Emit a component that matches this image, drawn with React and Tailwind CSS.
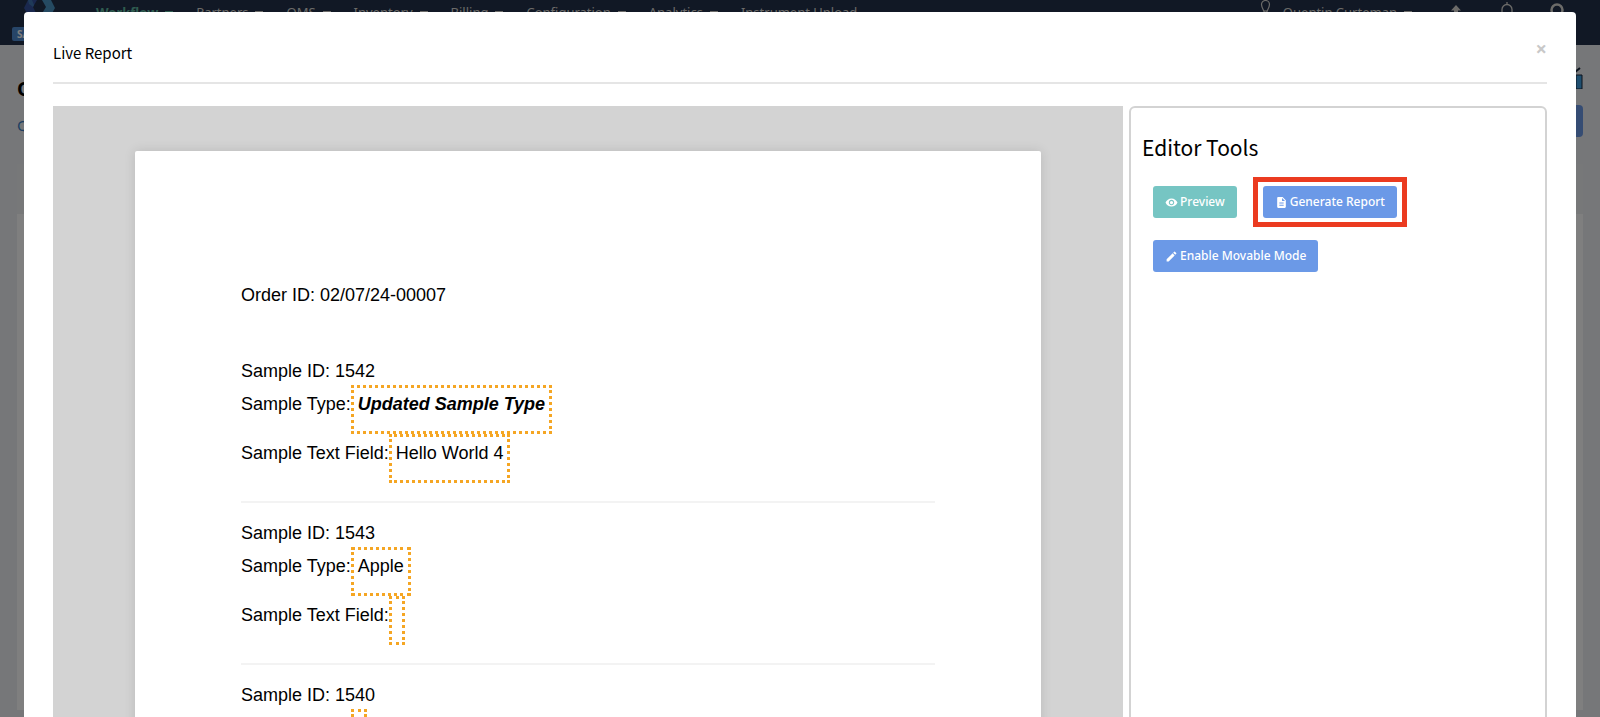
import { MdDescription, MdEdit, MdVisibility } from "react-icons/md";

const navItems = [
    { label: "Workflow", active: true, menu: true },
    { label: "Partners", menu: true },
    { label: "QMS", menu: true },
    { label: "Inventory", menu: true },
    { label: "Billing", menu: true },
    { label: "Configuration", menu: true },
    { label: "Analytics", menu: true },
    { label: "Instrument Upload" },
];

const samples = [
    { id: "1542", type: "Updated Sample Type", emphasised: true, text: "Hello World 4" },
    { id: "1543", type: "Apple", text: "" },
    { id: "1540", type: "", text: "" },
];

function Dash() {
    return <span className="w-2 h-px bg-current mb-[2px]" />;
}

function TopBar() {
    return (
        <header className="h-[45px] bg-[#22304a] text-[#d8d6d2] text-[13px] leading-5">
            <div className="flex items-start h-[27px] pl-[23px] pr-9">
                {/* Logo */}
                <svg className="w-8 h-6 shrink-0" viewBox="0 0 32 24">
                    <path d="M5 0h9l-4 7 4 8-5 7L1 8z" fill="#34509c" />
                    <path d="M19 0h9l4 8-8 14-6-7 5-8z" fill="#4a94c4" />
                    <path d="M5 0h4l2 5-1 2-4-3z" fill="#3f74b0" />
                </svg>
                <nav className="flex gap-[23px] pl-[41px] pt-[2px]">
                    {navItems.map((item) => (
                        <a
                            key={item.label}
                            href="#"
                            className={`flex items-center gap-[7px] whitespace-nowrap ${item.active ? "text-[#5fb8a0] font-bold" : ""}`}
                        >
                            {item.label}
                            {item.menu && <Dash />}
                        </a>
                    ))}
                </nav>
                <div className="flex items-start ml-auto">
                    {/* Location pin */}
                    <svg className="w-[11px] h-4 mr-3" viewBox="0 0 11 16" fill="none" stroke="currentColor" strokeWidth="1.2">
                        <path d="M5.500 15C4.500 11 1.500 8 1.500 4.500a4 4 0 0 1 8 0C9.500 8 6.500 11 5.500 15z" />
                        <path d="M3.500 11h4" />
                    </svg>
                    <a href="#" className="flex items-center gap-[7px] pt-[2px] whitespace-nowrap">
                        Quentin Curteman
                        <Dash />
                    </a>
                    <button type="button" aria-label="Upload" className="ml-[38px] mt-[5px]">
                        <svg className="w-3 h-4" viewBox="0 0 12 16" fill="currentColor">
                            <path d="M6 0l5 5.500H8V15H4V5.500H1z" />
                        </svg>
                    </button>
                    <button type="button" aria-label="Notifications" className="ml-[38px] mt-[2px]">
                        <svg className="w-[14px] h-4" viewBox="0 0 14 16" fill="none" stroke="currentColor" strokeWidth="1.300">
                            <path d="M7 0v2M2 13V7.500a5 5 0 0 1 10 0V13M0 13h14" />
                        </svg>
                    </button>
                    <button type="button" aria-label="Search" className="ml-9 mt-[3px]">
                        <svg className="w-[14px] h-4" viewBox="0 0 14 16" fill="none" stroke="currentColor" strokeWidth="2.500">
                            <circle cx="7" cy="7" r="5.500" />
                            <path d="M10 11l3 4" />
                        </svg>
                    </button>
                </div>
            </div>
            <span className="block w-20 h-[14px] ml-3 px-[5px] rounded-xs bg-[#4f8ad0] text-white text-[10px] leading-[14px] font-bold">
                SANDBOX
            </span>
        </header>
    );
}

function PageBehind() {
    return (
        <main className="px-[17px] pt-9">
            <div className="flex justify-between h-[75px]">
                <div>
                    <h1 className="text-xl leading-4 font-bold">Orders</h1>
                    <a href="#" className="block mt-[18px] text-[15px] leading-5 text-[#3d7fc4]">Queue</a>
                </div>
                <div className="flex flex-col items-end -mt-4">
                    <svg className="w-7 h-6" viewBox="0 0 28 24">
                        <path d="M2 14L20 7l5-4" fill="none" stroke="#16243a" strokeWidth="2" />
                        <path d="M14 10h6v14h-6z" fill="#8fc449" />
                        <path d="M21 10h6v14h-6z" fill="#3f9fe0" stroke="#16243a" strokeWidth="1" />
                    </svg>
                    <button type="button" aria-label="New order" className="w-24 h-8 mt-4 rounded bg-[#6b99e7]" />
                </div>
            </div>
            <div className="mt-2 h-[50px] bg-[#eff0f3]" />
            <div className="h-[496px] bg-white" />
        </main>
    );
}

function EditableField({ children }) {
    return (
        <span className="h-[49px] min-w-4 -mt-[3px] px-1 border-3 border-dotted border-[#f5a623]">
            {children}
        </span>
    );
}

function Sample({ sample }) {
    return (
        <section className="border-b-2 border-[#f3f3f3] pb-[15px] mb-[14px]">
            <p className="h-[33px]">Sample ID: {sample.id}</p>
            <div className="flex items-start h-[49px]">
                Sample Type:
                <EditableField>
                    {sample.emphasised ? <em className="font-bold">{sample.type}</em> : sample.type}
                </EditableField>
            </div>
            <div className="flex items-start h-[49px]">
                Sample Text Field:
                <EditableField>{sample.text}</EditableField>
            </div>
        </section>
    );
}

function ToolButton({ icon: Icon, color, children }) {
    return (
        <button
            type="button"
            className={`flex items-center gap-[2px] h-8 px-3 rounded-[3px] text-white text-xs font-medium ${color}`}
        >
            <Icon size={13} />
            {children}
        </button>
    );
}

function EditorTools() {
    return (
        <aside className="w-[418px] shrink-0 border-2 border-[#d3d3d3] rounded-md px-[11px] pt-[23px]">
            <h3 className="text-[21px] leading-8 font-['Noto_Sans_CJK_JP',sans-serif]">Editor Tools</h3>
            <div className="flex flex-wrap gap-x-[26px] gap-y-[22px] mt-[23px] pl-[11px]">
                <ToolButton icon={MdVisibility} color="bg-[#76c5c3]">Preview</ToolButton>
                <div className="relative">
                    <ToolButton icon={MdDescription} color="bg-[#6b99e7]">Generate Report</ToolButton>
                    <span className="absolute -inset-x-[10px] -inset-y-[9px] border-5 border-[#eb3b20] pointer-events-none" />
                </div>
                <ToolButton icon={MdEdit} color="bg-[#6b99e7]">Enable Movable Mode</ToolButton>
            </div>
        </aside>
    );
}

function App() {
    return (
        <div className="relative h-screen overflow-hidden bg-[#edeef2] text-black font-['Noto_Sans',sans-serif]">
            <TopBar />
            <PageBehind />

            {/* Modal */}
            <div className="absolute inset-0 bg-black/50 pt-3 px-6">
                <div role="dialog" aria-label="Live Report" className="bg-white rounded-t px-[29px] pt-[29px]">
                    <div className="flex justify-between items-start border-b-2 border-[#e5e5e5] h-[43px]">
                        <h2 className="text-[15px] leading-6 font-['Noto_Sans_CJK_JP',sans-serif]">Live Report</h2>
                        <button type="button" aria-label="Close" className="text-xl leading-4 font-bold text-[#c8c8c8]">
                            ×
                        </button>
                    </div>
                    <div className="flex gap-[6px] mt-[22px]">
                        <div className="flex-1 bg-[#d3d3d3] pt-[45px] px-[82px]">
                            <div className="bg-white rounded-xs shadow-[0_0_12px_rgba(0,0,0,0.12)] px-[106px] pt-[128px] font-['Liberation_Sans',Arial,sans-serif] text-[18px] leading-8">
                                <p className="mb-11">Order ID: 02/07/24-00007</p>
                                {samples.map((sample) => (
                                    <Sample key={sample.id} sample={sample} />
                                ))}
                            </div>
                        </div>
                        <EditorTools />
                    </div>
                </div>
            </div>
        </div>
    );
}

export default App;
